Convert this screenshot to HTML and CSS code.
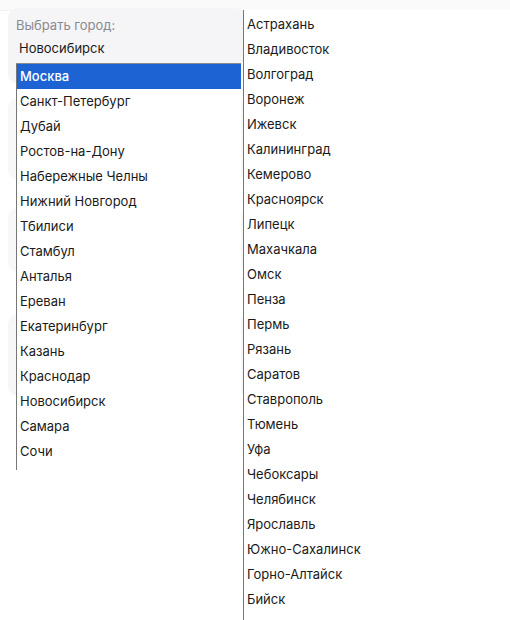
FILE: index.html
```html
<!DOCTYPE html>
<html lang="ru">
<head>
    <meta charset="UTF-8">
    <meta name="viewport" content="width=device-width, initial-scale=1.0">
    <title>Выбрать город</title>
    <link rel="stylesheet" href="styles.css">
</head>
<body>
    <div class="topbar"></div>

    <div class="page">
        <div class="card city-card">
            <span class="city-label">Выбрать город:</span>
            <span class="city-value">Новосибирск</span>
        </div>
        <div class="card card-b"></div>
        <div class="card card-c"></div>
        <div class="card card-d"></div>
    </div>

    <!-- dropdown opened over the page -->
    <ul class="city-list list-main">
        <li class="selected">Москва</li>
        <li>Санкт-Петербург</li>
        <li>Дубай</li>
        <li>Ростов-на-Дону</li>
        <li>Набережные Челны</li>
        <li>Нижний Новгород</li>
        <li>Тбилиси</li>
        <li>Стамбул</li>
        <li>Анталья</li>
        <li>Ереван</li>
        <li>Екатеринбург</li>
        <li>Казань</li>
        <li>Краснодар</li>
        <li>Новосибирск</li>
        <li>Самара</li>
        <li>Сочи</li>
    </ul>

    <ul class="city-list list-more">
        <li>Астрахань</li>
        <li>Владивосток</li>
        <li>Волгоград</li>
        <li>Воронеж</li>
        <li>Ижевск</li>
        <li>Калининград</li>
        <li>Кемерово</li>
        <li>Красноярск</li>
        <li>Липецк</li>
        <li>Махачкала</li>
        <li>Омск</li>
        <li>Пенза</li>
        <li>Пермь</li>
        <li>Рязань</li>
        <li>Саратов</li>
        <li>Ставрополь</li>
        <li>Тюмень</li>
        <li>Уфа</li>
        <li>Чебоксары</li>
        <li>Челябинск</li>
        <li>Ярославль</li>
        <li>Южно-Сахалинск</li>
        <li>Горно-Алтайск</li>
        <li>Бийск</li>
    </ul>
</body>
</html>
```

FILE: styles.css
```css
/* General styling */
body {
    font-family: Inter, "Noto Sans", sans-serif;
    font-size: 13px;
    color: #1a1a1a;
    background-color: #fff;
    margin: 0;
    height: 620px;
    position: relative;
    overflow: hidden;
}

.topbar {
    height: 10px;
    background-color: #fafafb;
    border-bottom: 1px solid #f1f1f3;
}

.page {
    padding: 0 8px;
    width: 237px;
    display: flex;
    flex-direction: column;
    gap: 14px;
}

.card {
    background-color: #f5f5f7;
    border-radius: 10px;
}

.city-card {
    margin-top: -3px;
    height: 76px;
    padding: 9px 8px 0;
    display: flex;
    flex-direction: column;
    gap: 7px;
    box-sizing: border-box;
}

.city-label {
    color: #8a8a8e;
}

.city-value {
    padding-left: 3px;
    color: #1a1a1a;
}

.card-b {
    height: 82px;
    background-color: #f8f8f9;
}

.card-c {
    height: 64px;
    margin-top: 14px;
    background-color: #f8f8f9;
}

.card-d {
    height: 82px;
    margin-top: 28px;
    background-color: #f7f7f8;
}

/* Dropdown lists */
.city-list {
    list-style: none;
    margin: 0;
    padding: 0;
    position: absolute;
    background-color: #fff;
    border-left: 1px solid #767676;
}

.city-list li {
    height: 25px;
    line-height: 25px;
    padding-left: 3px;
    white-space: nowrap;
}

.list-main {
    left: 16px;
    top: 63px;
    width: 224px;
    height: 406px;
    border-top: 1px solid #8a8a8a;
}

.list-main .selected {
    background-color: #1d63d3;
    color: #fff;
    font-weight: 500;
}

.list-more {
    left: 243px;
    top: 10px;
    right: 0;
    bottom: 0;
    padding-top: 2px;
}
```
